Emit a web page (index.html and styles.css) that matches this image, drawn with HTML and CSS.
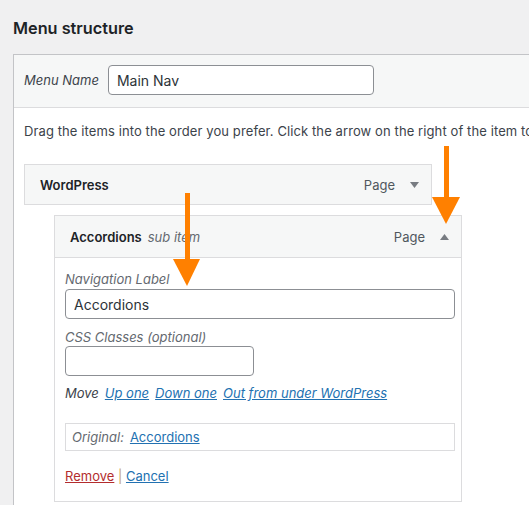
FILE: index.html
```html
<!DOCTYPE html>
<html lang="en">
<head>
  <meta charset="UTF-8" />
  <meta name="viewport" content="width=device-width, initial-scale=1.0"/>
  <title>Menu structure</title>
  <link rel="stylesheet" href="styles.css">
</head>
<body>
  <h2 class="title">Menu structure</h2>

  <div class="menu-panel">
    <!-- Menu name header -->
    <div class="menu-header">
      <label class="name-label" for="menuName">Menu Name</label>
      <input id="menuName" class="name-input" type="text" value="Main Nav" />
    </div>

    <div class="menu-body">
      <p class="drag-help">Drag the items into the order you prefer. Click the arrow on the right of the item to reveal additional configuration options.</p>

      <!-- Top level item -->
      <div class="menu-item">
        <div class="item-bar">
          <span class="item-title">WordPress</span>
          <span class="item-type">Page</span>
          <svg class="toggle" width="9" height="6" viewBox="0 0 9 6"><path d="M0 0H9L4.5 6Z" fill="#787c82"/></svg>
        </div>
      </div>

      <!-- Sub item, open -->
      <div class="menu-item sub">
        <div class="item-bar">
          <span class="item-title">Accordions</span>
          <span class="sub-note">sub item</span>
          <span class="item-type">Page</span>
          <svg class="toggle" width="9" height="6" viewBox="0 0 9 6"><path d="M0 6H9L4.5 0Z" fill="#787c82"/></svg>
        </div>
        <div class="item-settings">
          <label class="field-label nav-label">Navigation Label</label>
          <input class="field wide" type="text" value="Accordions" />

          <label class="field-label css-label">CSS Classes (optional)</label>
          <input class="field short" type="text" value="" />

          <div class="move-row">
            <span class="move-label">Move</span>
            <a href="#">Up one</a>
            <a href="#">Down one</a>
            <a href="#">Out from under WordPress</a>
          </div>

          <div class="original">
            <span class="original-label">Original:</span>
            <a href="#">Accordions</a>
          </div>

          <div class="actions">
            <a href="#" class="remove">Remove</a> <span class="sep">|</span> <a href="#">Cancel</a>
          </div>
        </div>
      </div>
    </div>
  </div>

  <!-- Annotation arrows -->
  <svg class="annotations" width="529" height="505" viewBox="0 0 529 505">
    <rect x="444" y="146" width="5" height="52" fill="#ff8000"/>
    <path d="M432 197H460L446 224Z" fill="#ff8000"/>
    <rect x="185" y="193" width="5" height="67" fill="#ff8000"/>
    <path d="M173 259H200L187 286Z" fill="#ff8000"/>
  </svg>
</body>
</html>
```

FILE: styles.css
```css
body {
  margin: 0;
  padding: 0 0 0 13px;
  background-color: #f0f0f1;
  font-family: Inter, "Liberation Sans", sans-serif;
  font-size: 13px;
  color: #1d2327;
  overflow: hidden;
  height: 505px;
  position: relative;
}

.title {
  margin: 0;
  padding-top: 16px;
  font-size: 16.3px;
  font-weight: 600;
  line-height: 24px;
  height: 38px;
}

.menu-panel {
  width: 560px;
  border: 1px solid #c3c4c7;
  background-color: #fff;
  overflow: hidden;
}

.menu-header {
  display: flex;
  align-items: center;
  gap: 9px;
  padding: 10px 10px 12px;
  background-color: #f6f7f7;
  border-bottom: 1px solid #dcdcde;
}

.name-label {
  font-style: italic;
  color: #3c434a;
}

.name-input {
  width: 266px;
  height: 30px;
  box-sizing: border-box;
  border: 1px solid #8c8f94;
  border-radius: 4px;
  padding: 0 8px;
  font-family: inherit;
  font-size: 14px;
  color: #2c3338;
  background: #fff;
}

.menu-body {
  padding: 13px 10px 0;
}

.drag-help {
  margin: 0 0 23px;
  line-height: 20px;
  white-space: nowrap;
  letter-spacing: 0.1px;
  color: #3c434a;
}

.menu-item {
  width: 408px;
  box-sizing: border-box;
  margin-bottom: 10px;
}

.menu-item.sub {
  margin-left: 30px;
}

.item-bar {
  display: flex;
  align-items: center;
  height: 41px;
  box-sizing: border-box;
  padding: 0 12px 0 15px;
  border: 1px solid #dcdcde;
  background-color: #f6f7f7;
}

.sub .item-bar {
  height: 43px;
}

.item-title {
  font-weight: 600;
  font-size: 13px;
  color: #1d2327;
}

.sub-note {
  margin-left: 6px;
  font-style: italic;
  color: #646970;
}

.item-type {
  margin-left: auto;
  margin-right: 15px;
  color: #50575e;
}

.toggle {
  display: block;
}

.item-settings {
  padding: 12px 6px 16px 10px;
  border: 1px solid #dcdcde;
  border-top: none;
}

.field-label {
  display: block;
  line-height: 18px;
  font-style: italic;
  color: #646970;
}

.nav-label {
  margin-bottom: 1px;
}

.css-label {
  margin-top: 9px;
}

.field {
  display: block;
  height: 30px;
  box-sizing: border-box;
  border: 1px solid #8c8f94;
  border-radius: 4px;
  padding: 0 8px;
  font-family: inherit;
  font-size: 14px;
  color: #2c3338;
  background: #fff;
}

.field.wide {
  width: 390px;
}

.field.short {
  width: 189px;
}

a {
  color: #2271b1;
  text-decoration: underline;
}

.move-row {
  margin-top: 8px;
  line-height: 18px;
  display: flex;
  gap: 6px;
}

.move-row a {
  font-style: italic;
}

.move-label {
  font-style: italic;
  color: #3c434a;
  margin-right: 0;
}

.original {
  margin-top: 21px;
  width: 390px;
  height: 28px;
  box-sizing: border-box;
  border: 1px solid #dcdcde;
  padding: 0 6px;
  display: flex;
  align-items: center;
  gap: 6px;
}

.original-label {
  font-style: italic;
  color: #646970;
}

.actions {
  margin-top: 16px;
  line-height: 18px;
}

.remove {
  color: #b32d2e;
}

.sep {
  color: #c3a26c;
}

.annotations {
  position: absolute;
  top: 0;
  left: 0;
  pointer-events: none;
}
```
